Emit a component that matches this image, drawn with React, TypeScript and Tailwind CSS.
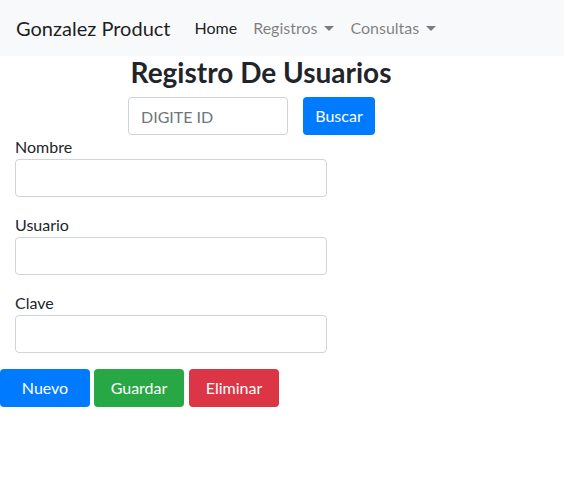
const Caret = () => (
  <span className="ml-[7px] inline-block h-0 w-0 border-x-[5px] border-t-[5px] border-x-transparent border-t-current align-[3px]" />
);

export default function App() {
  return (
    <div className="min-h-screen bg-white text-[#212529] font-['Lato',sans-serif]">
      <nav className="flex h-[56px] items-center bg-[#f8f9fa] px-4">
        <span className="mr-4 text-[20px] leading-[30px] text-black/90">Gonzalez Product</span>
        <div className="flex items-center text-[16px]">
          <a className="px-2 text-black/90">Home</a>
          <a className="px-2 text-black/50">
            Registros
            <Caret />
          </a>
          <a className="px-2 text-black/50">
            Consultas
            <Caret />
          </a>
        </div>
      </nav>

      <div className="mb-2 w-[522px] text-center">
        <h3 className="text-[28px] font-bold leading-[33px]">Registro De Usuarios</h3>
      </div>
      <div className="flex items-center gap-[15px] pl-[128px]">
        <input
          placeholder="DIGITE ID"
          className="h-[38px] w-[160px] rounded border border-[#ced4da] px-3 text-[16px] placeholder:text-[#6c757d]"
        />
        <button className="h-[38px] w-[72px] rounded bg-[#007bff] text-[16px] text-white">Buscar</button>
      </div>

      <form className="w-[327px] pl-[15px]">
        {["Nombre", "Usuario", "Clave"].map((l) => (
          <div key={l} className="mb-4">
            <label className="block text-[16px] leading-[24px]">{l}</label>
            <input className="block h-[38px] w-full rounded border border-[#ced4da] px-3" />
          </div>
        ))}
      </form>
      <div className="flex gap-1 text-[16px] text-white">
        <button className="h-[38px] w-[90px] rounded bg-[#007bff]">Nuevo</button>
        <button className="h-[38px] w-[90px] rounded bg-[#28a745]">Guardar</button>
        <button className="ml-[1px] h-[38px] w-[90px] rounded bg-[#dc3545]">Eliminar</button>
      </div>
    </div>
  );
}
